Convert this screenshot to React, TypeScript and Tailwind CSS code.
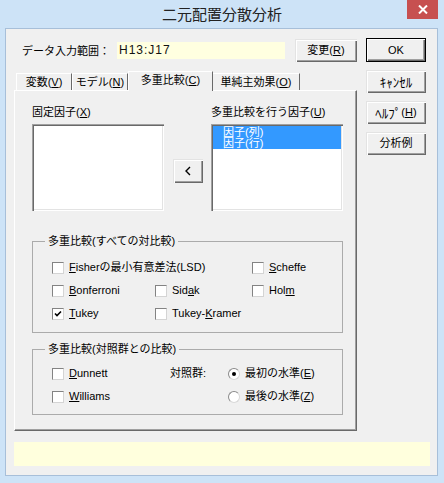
import clsx from "clsx";
import type { ReactNode } from "react";

const raised =
  "shadow-[inset_1px_1px_0_#e3e3e3,inset_2px_2px_0_#fff,inset_-1px_-1px_0_#696969,inset_-2px_-2px_0_#a0a0a0]";
const sunken =
  "shadow-[inset_1px_1px_0_#a0a0a0,inset_2px_2px_0_#696969,inset_-1px_-1px_0_#fff,inset_-2px_-2px_0_#e3e3e3]";

function Btn({ children, className, def = false }: { children: ReactNode; className?: string; def?: boolean }) {
  return (
    <div
      className={clsx(
        "flex items-center justify-center bg-[#f0f0f0] text-black",
        def
          ? "border border-black shadow-[inset_1px_1px_0_#fff,inset_-1px_-1px_0_#696969,inset_-2px_-2px_0_#a0a0a0]"
          : raised,
        className
      )}
    >
      {children}
    </div>
  );
}

function Check({ checked = false, children }: { checked?: boolean; children: ReactNode }) {
  return (
    <div className="flex items-center h-[23px] whitespace-nowrap">
      <span className="w-[12px] h-[12px] shrink-0 bg-white border border-t-[#838383] border-l-[#838383] border-r-[#d4d4d4] border-b-[#d4d4d4] flex items-center justify-center">
        {checked && (
          <svg width="8" height="8" viewBox="0 0 8 8">
            <path d="M1 3.5 L3 5.5 L7 1.5" fill="none" stroke="#000" strokeWidth="1.6" />
          </svg>
        )}
      </span>
      <span className="ml-[5px]">{children}</span>
    </div>
  );
}

function Radio({ checked = false, children }: { checked?: boolean; children: ReactNode }) {
  return (
    <div className="flex items-center h-[23px] whitespace-nowrap">
      <span className="w-[12px] h-[12px] shrink-0 rounded-full bg-white border border-t-[#8a8a8a] border-l-[#8a8a8a] border-r-[#d8d8d8] border-b-[#d8d8d8] flex items-center justify-center">
        {checked && <span className="w-[4px] h-[4px] rounded-full bg-black" />}
      </span>
      <span className="ml-[5px]">{children}</span>
    </div>
  );
}

function Group({ title, className, children }: { title: string; className?: string; children: ReactNode }) {
  return (
    <div className={clsx("relative w-[311px] border border-[#ababab]", className)}>
      <span className="absolute -top-[7px] left-[12px] px-[3px] bg-[#f0f0f0] leading-[13px]">{title}</span>
      {children}
    </div>
  );
}

export default function App() {
  return (
    <div className="w-[444px] h-[483px] bg-[#cde3f7] flex flex-col font-['Liberation_Sans','Noto_Sans_CJK_JP',sans-serif] text-[11px] leading-[13px] text-black">
      {/* title bar */}
      <div className="relative h-[28px] flex items-center justify-center">
        <span className="text-[15px] text-[#222] font-['Noto_Sans_CJK_JP',sans-serif] -mt-[1px]">二元配置分散分析</span>
        <div className="absolute right-[6px] top-0 w-[31px] h-[19px] bg-[#c75050] flex items-center justify-center">
          <svg width="10" height="9" viewBox="0 0 10 9">
            <path d="M1 0.5 L9 8.5 M9 0.5 L1 8.5" stroke="#fff" strokeWidth="2" />
          </svg>
        </div>
      </div>

      {/* client */}
      <div className="ml-[5px] mr-[6px] h-[448px] border border-[#a7bfd9] bg-[#f0f0f0] pl-[8px] flex flex-col">
        <div className="flex">
          {/* left column */}
          <div className="w-[343px] pt-[10px] flex flex-col">
            <div className="flex items-center h-[23px]">
              <span className="pl-[8px] w-[103px] whitespace-nowrap font-['Noto_Sans_CJK_JP',sans-serif]">データ入力範囲：</span>
              <div className="w-[168px] h-[17px] bg-[#ffffe0] flex items-center pl-[2px] text-[12px] tracking-[1px] text-[#111]">
                H13:J17
              </div>
              <Btn className="ml-auto w-[62px] h-[23px]">
                変更(<u>R</u>)
              </Btn>
            </div>

            {/* tabs */}
            <div className="mt-[9px] h-[19px] flex items-end pl-[2px]">
              <div className="w-[56px] h-[17px] border-t border-l border-white border-r border-r-[#696969] flex items-center justify-center">
                変数(<u>V</u>)
              </div>
              <div className="w-[56px] h-[17px] border-t border-l border-white border-r border-r-[#696969] flex items-center justify-center">
                モデル(<u>N</u>)
              </div>
              <div className="relative z-10 -mb-[1px] w-[85px] h-[20px] bg-[#f0f0f0] border-t border-l border-white border-r border-r-[#696969] flex items-start justify-center pt-[2px]">
                多重比較(<u>C</u>)
              </div>
              <div className="w-[87px] h-[17px] border-t border-white border-r border-r-[#696969] flex items-center justify-center">
                単純主効果(<u>O</u>)
              </div>
            </div>

            {/* panel */}
            <div className="h-[341px] border border-t-white border-l-white border-r-[#696969] border-b-[#696969] shadow-[inset_-1px_-1px_0_#a0a0a0] pl-[17px] pt-[15px] flex flex-col">
              <div className="flex items-start">
                <div className="flex flex-col">
                  <span>
                    固定因子(<u>X</u>)
                  </span>
                  <div className={clsx("mt-[5px] w-[132px] h-[87px] bg-white", sunken)} />
                </div>
                <Btn className="ml-[9px] mt-[53px] w-[30px] h-[24px] text-[14px]">
                  <svg width="8" height="10" viewBox="0 0 8 10">
                    <path d="M6 1 L2 5 L6 9" fill="none" stroke="#000" strokeWidth="1.4" />
                  </svg>
                </Btn>
                <div className="ml-[8px] flex flex-col">
                  <span>
                    多重比較を行う因子(<u>U</u>)
                  </span>
                  <div className={clsx("mt-[5px] w-[132px] h-[87px] bg-white p-[2px]", sunken)}>
                    <div className="bg-[#3399ff] text-white pl-[10px] leading-[12px]">因子(列)</div>
                    <div className="bg-[#3399ff] text-white pl-[10px] leading-[11px]">因子(行)</div>
                  </div>
                </div>
              </div>

              <Group title="多重比較(すべての対比較)" className="mt-[30px] h-[92px] pt-[14px] pl-[19px]">
                <div className="grid grid-cols-[103px_97px_1fr]">
                  <div className="col-span-2">
                    <Check>
                      <u>F</u>isherの最小有意差法(LSD)
                    </Check>
                  </div>
                  <Check>
                    <u>S</u>cheffe
                  </Check>
                  <Check>
                    <u>B</u>onferroni
                  </Check>
                  <Check>
                    Sid<u>a</u>k
                  </Check>
                  <Check>
                    Hol<u>m</u>
                  </Check>
                  <Check checked>
                    <u>T</u>ukey
                  </Check>
                  <div className="col-span-2">
                    <Check>
                      Tukey-<u>K</u>ramer
                    </Check>
                  </div>
                </div>
              </Group>

              <Group title="多重比較(対照群との比較)" className="mt-[16px] h-[66px] pt-[12px] pl-[19px]">
                <div className="grid grid-cols-[118px_58px_1fr]">
                  <Check>
                    <u>D</u>unnett
                  </Check>
                  <div className="flex items-center h-[23px]">対照群:</div>
                  <Radio checked>
                    最初の水準(<u>E</u>)
                  </Radio>
                  <Check>
                    <u>W</u>illiams
                  </Check>
                  <div />
                  <Radio>
                    最後の水準(<u>Z</u>)
                  </Radio>
                </div>
              </Group>
            </div>
          </div>

          {/* right column */}
          <div className="ml-[9px] pt-[9px] flex flex-col gap-[8px]">
            <Btn def className="w-[60px] h-[24px]">
              OK
            </Btn>
            <Btn className="w-[60px] h-[23px] text-[13px] font-['Noto_Sans_CJK_JP',sans-serif]">ｷｬﾝｾﾙ</Btn>
            <Btn className="w-[60px] h-[23px]">
              <span className="text-[13px] font-['Noto_Sans_CJK_JP',sans-serif]">ﾍﾙﾌﾟ</span>(<u>H</u>)
            </Btn>
            <Btn className="w-[60px] h-[23px]">分析例</Btn>
          </div>
        </div>

        <div className="mt-[11px] w-[416px] h-[24px] bg-[#ffffdd]" />
      </div>
    </div>
  );
}
